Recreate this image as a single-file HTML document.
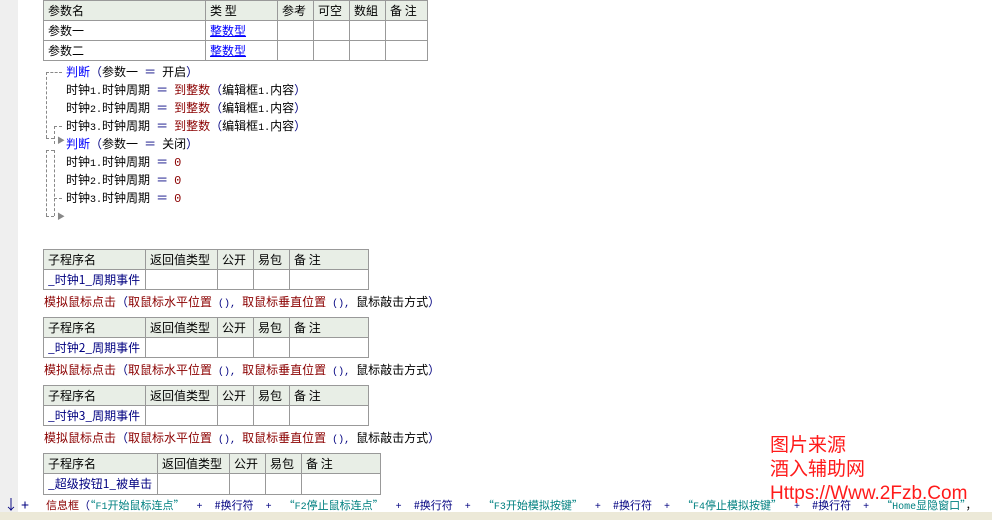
<!DOCTYPE html><html><head><meta charset="utf-8"><style>
body{margin:0;width:992px;height:520px;overflow:hidden;background:#fff;position:relative;font-family:"Noto Sans CJK SC","WenQuanYi Zen Hei",sans-serif;font-size:12px;color:#000}
.a{position:absolute;white-space:pre;line-height:18px}
.m{font-family:"Liberation Mono",monospace;font-size:10px}
table{position:absolute;border-collapse:collapse;table-layout:fixed}
td{border:1px solid #999;padding:0 4px;height:19px;font-size:12px;line-height:14px;white-space:nowrap;overflow:hidden}
tr.h td{background:#e8eee6}
.b{color:#0000ff}.u{color:#0000ff;text-decoration:underline}.r{color:#8b0000}.n{color:#000080}.t{color:#008080}
.dl{position:absolute;border-left:1px dashed #888}.dh{position:absolute;border-top:1px dashed #888}
</style></head><body>
<div style="position:absolute;left:0;top:0;width:18px;height:520px;background:#efefef"></div>
<div style="position:absolute;left:0;top:512px;width:992px;height:8px;background:#ece9d8"></div>
<table style="left:43px;top:0;width:385px"><colgroup><col style="width:162px"><col style="width:72px"><col style="width:36px"><col style="width:36px"><col style="width:36px"><col style="width:42px"></colgroup>
<tr class="h"><td>参数名</td><td>类 型</td><td>参考</td><td>可空</td><td>数組</td><td>备 注</td></tr>
<tr><td>参数一</td><td class="u">整数型</td><td></td><td></td><td></td><td></td></tr>
<tr><td>参数二</td><td class="u">整数型</td><td></td><td></td><td></td><td></td></tr></table>
<div class="dh" style="left:46px;top:72px;width:16px"></div>
<div class="dl" style="left:46px;top:72px;height:66px"></div>
<div class="dh" style="left:46px;top:138px;width:8px"></div>
<div class="dh" style="left:54px;top:126px;width:8px"></div>
<div class="dl" style="left:54px;top:126px;height:18px"></div>
<div class="dl" style="left:46px;top:150px;height:66px"></div>
<div class="dh" style="left:46px;top:150px;width:8px"></div>
<div class="dl" style="left:54px;top:150px;height:66px"></div>
<div class="dh" style="left:54px;top:198px;width:8px"></div>
<div class="dh" style="left:46px;top:216px;width:8px"></div>
<div class="a" style="left:57px;top:132px;color:#888;font-size:8px">▶</div>
<div class="a" style="left:57px;top:208px;color:#888;font-size:8px">▶</div>
<div class="a" style="left:66px;top:63px"><span class="b">判断</span><span class="n">（</span>参数一<span class="m"> </span><span class="n">＝</span><span class="m"> </span>开启<span class="n">）</span></div>
<div class="a" style="left:66px;top:81px">时钟<span class="m">1.</span>时钟周期<span class="m"> </span><span class="n">＝</span><span class="m"> </span><span class="r">到整数</span><span class="n">（</span>编辑框<span class="m">1.</span>内容<span class="n">）</span></div>
<div class="a" style="left:66px;top:99px">时钟<span class="m">2.</span>时钟周期<span class="m"> </span><span class="n">＝</span><span class="m"> </span><span class="r">到整数</span><span class="n">（</span>编辑框<span class="m">1.</span>内容<span class="n">）</span></div>
<div class="a" style="left:66px;top:117px">时钟<span class="m">3.</span>时钟周期<span class="m"> </span><span class="n">＝</span><span class="m"> </span><span class="r">到整数</span><span class="n">（</span>编辑框<span class="m">1.</span>内容<span class="n">）</span></div>
<div class="a" style="left:66px;top:135px"><span class="b">判断</span><span class="n">（</span>参数一<span class="m"> </span><span class="n">＝</span><span class="m"> </span>关闭<span class="n">）</span></div>
<div class="a" style="left:66px;top:153px">时钟<span class="m">1.</span>时钟周期<span class="m"> </span><span class="n">＝</span><span class="m"> </span><span class="r m" style="font-size:12px">0</span></div>
<div class="a" style="left:66px;top:171px">时钟<span class="m">2.</span>时钟周期<span class="m"> </span><span class="n">＝</span><span class="m"> </span><span class="r m" style="font-size:12px">0</span></div>
<div class="a" style="left:66px;top:189px">时钟<span class="m">3.</span>时钟周期<span class="m"> </span><span class="n">＝</span><span class="m"> </span><span class="r m" style="font-size:12px">0</span></div>

<table style="left:43px;top:249px;width:325px"><colgroup><col style="width:102px"><col style="width:72px"><col style="width:36px"><col style="width:36px"><col style="width:79px"></colgroup>
<tr class="h"><td>子程序名</td><td>返回值类型</td><td>公开</td><td>易包</td><td>备 注</td></tr>
<tr><td class="n">_时钟1_周期事件</td><td></td><td></td><td></td><td></td></tr></table>
<div class="a" style="left:44px;top:293px"><span class="r">模拟鼠标点击</span><span class="n">（</span><span class="r">取鼠标水平位置</span><span class="m n"> (), </span><span class="r">取鼠标垂直位置</span><span class="m n"> (), </span>鼠标敲击方式<span class="n">）</span></div>
<table style="left:43px;top:317px;width:325px"><colgroup><col style="width:102px"><col style="width:72px"><col style="width:36px"><col style="width:36px"><col style="width:79px"></colgroup>
<tr class="h"><td>子程序名</td><td>返回值类型</td><td>公开</td><td>易包</td><td>备 注</td></tr>
<tr><td class="n">_时钟2_周期事件</td><td></td><td></td><td></td><td></td></tr></table>
<div class="a" style="left:44px;top:361px"><span class="r">模拟鼠标点击</span><span class="n">（</span><span class="r">取鼠标水平位置</span><span class="m n"> (), </span><span class="r">取鼠标垂直位置</span><span class="m n"> (), </span>鼠标敲击方式<span class="n">）</span></div>
<table style="left:43px;top:385px;width:325px"><colgroup><col style="width:102px"><col style="width:72px"><col style="width:36px"><col style="width:36px"><col style="width:79px"></colgroup>
<tr class="h"><td>子程序名</td><td>返回值类型</td><td>公开</td><td>易包</td><td>备 注</td></tr>
<tr><td class="n">_时钟3_周期事件</td><td></td><td></td><td></td><td></td></tr></table>
<div class="a" style="left:44px;top:429px"><span class="r">模拟鼠标点击</span><span class="n">（</span><span class="r">取鼠标水平位置</span><span class="m n"> (), </span><span class="r">取鼠标垂直位置</span><span class="m n"> (), </span>鼠标敲击方式<span class="n">）</span></div>
<table style="left:43px;top:453px;width:337px"><colgroup><col style="width:114px"><col style="width:72px"><col style="width:36px"><col style="width:36px"><col style="width:79px"></colgroup>
<tr class="h"><td>子程序名</td><td>返回值类型</td><td>公开</td><td>易包</td><td>备 注</td></tr>
<tr><td class="n" style="height:20px">_超级按钮1_被单击</td><td></td><td></td><td></td><td></td></tr></table>
<div class="a" style="left:4px;top:496px;color:#000080;font-size:14px">↓ +</div>
<div class="a" style="left:46px;top:496px;font-size:11px"><span class="r">信息框</span><span class="n">（</span><span class="t">“<span class="m">F1</span>开始鼠标连点”</span><span class="m n">  +  </span><span class="n">#换行符</span><span class="m n">  +  </span><span class="t">“<span class="m">F2</span>停止鼠标连点”</span><span class="m n">  +  </span><span class="n">#换行符</span><span class="m n">  +  </span><span class="t">“<span class="m">F3</span>开始模拟按键”</span><span class="m n">  +  </span><span class="n">#换行符</span><span class="m n">  +  </span><span class="t">“<span class="m">F4</span>停止模拟按键”</span><span class="m n">  +  </span><span class="n">#换行符</span><span class="m n">  +  </span><span class="t">“<span class="m">Home</span>显隐窗口”</span>，</div>
<div class="a" style="left:770px;top:434px;color:#ff1a1a;font-size:19px;line-height:24px;font-family:'Liberation Sans','Noto Sans CJK SC',sans-serif">图片来源<br>酒入辅助网<br>Https://Www.2Fzb.Com</div>
</body></html>
